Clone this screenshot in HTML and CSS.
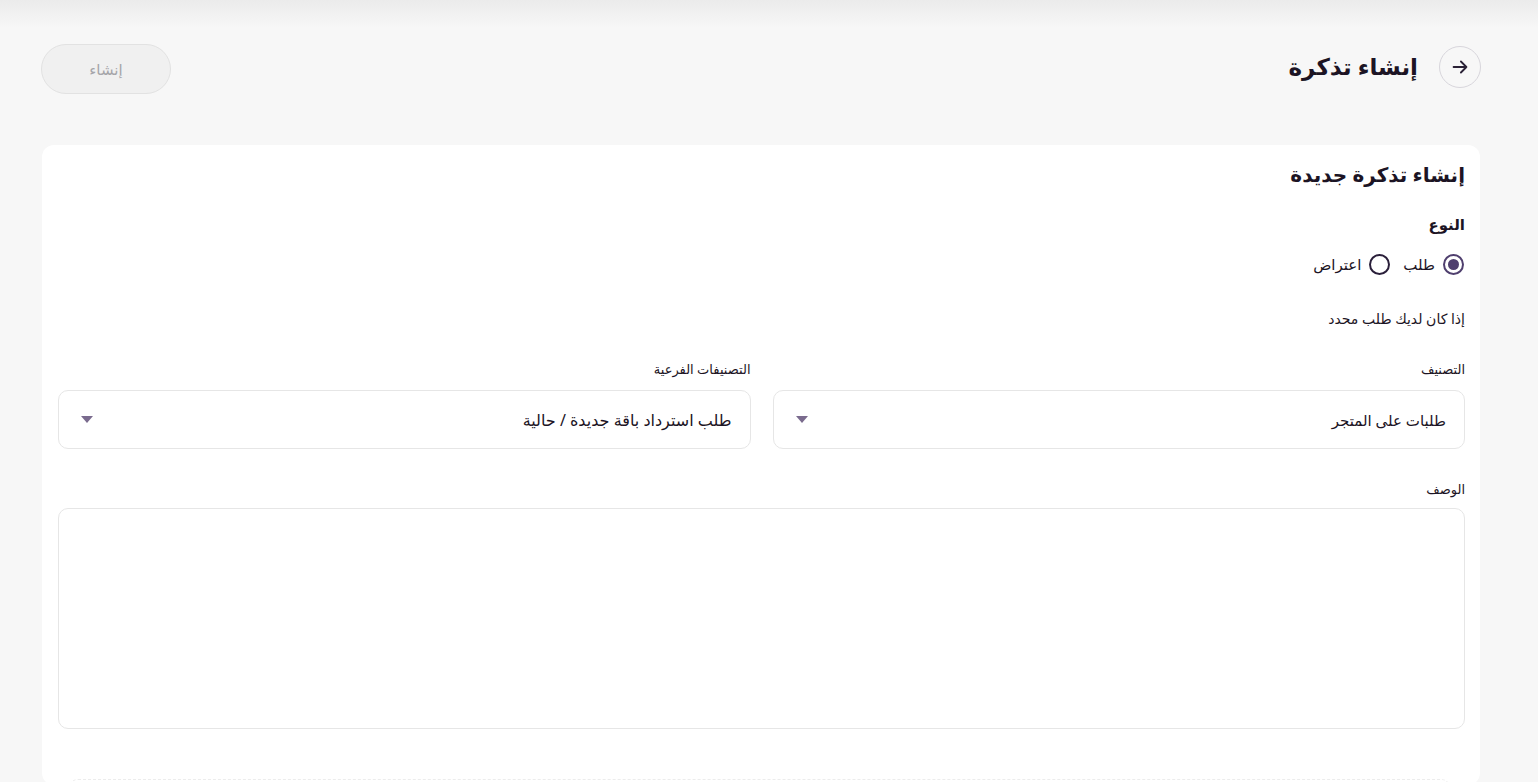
FILE: index.html
```html
<!DOCTYPE html>
<html lang="ar" dir="rtl">
<head>
    <meta charset="UTF-8">
    <meta name="viewport" content="width=device-width, initial-scale=1.0">
    <title>إنشاء تذكرة</title>
    <link rel="stylesheet" href="styles.css">
</head>
<body>
    <div class="top-shade"></div>
    <main class="page">
        <header class="page-header">
            <div class="header-title">
                <button class="back-button" aria-label="رجوع">
                    <svg viewBox="0 0 24 24">
                        <path d="M5 12h14M13 6l6 6-6 6"></path>
                    </svg>
                </button>
                <h1 class="title">إنشاء تذكرة</h1>
            </div>
            <button class="create-button" disabled>إنشاء</button>
        </header>

        <section class="card">
            <h2 class="card-title">إنشاء تذكرة جديدة</h2>

            <h3 class="field-title">النوع</h3>
            <div class="radio-group">
                <label class="radio">
                    <span class="radio-circle checked"></span>
                    <span>طلب</span>
                </label>
                <label class="radio">
                    <span class="radio-circle"></span>
                    <span>اعتراض</span>
                </label>
            </div>

            <p class="hint">إذا كان لديك طلب محدد</p>

            <div class="select-row">
                <div class="field">
                    <label class="field-label">التصنيف</label>
                    <div class="select">
                        <span>طلبات على المتجر</span>
                        <span class="select-arrow"></span>
                    </div>
                </div>
                <div class="field">
                    <label class="field-label">التصنيفات الفرعية</label>
                    <div class="select">
                        <span>طلب استرداد باقة جديدة / حالية</span>
                        <span class="select-arrow"></span>
                    </div>
                </div>
            </div>

            <div class="field">
                <label class="field-label">الوصف</label>
                <textarea class="textarea"></textarea>
            </div>

            <div class="upload-area"></div>
        </section>
    </main>
</body>
</html>
```

FILE: styles.css
```css
* {
    margin: 0;
    padding: 0;
    box-sizing: border-box;
    font-family: "Noto Sans", "DejaVu Sans", sans-serif;
}

body {
    background: #f7f7f7;
    color: #1c1424;
    height: 782px;
    overflow: hidden;
}

.top-shade {
    position: absolute;
    top: 0;
    left: 0;
    right: 0;
    height: 28px;
    background: linear-gradient(to bottom, #ebebeb, #f7f7f7);
    pointer-events: none;
}

.page {
    position: relative;
    padding: 44px 58px 0 41px;
}

.page-header {
    display: flex;
    justify-content: space-between;
    align-items: center;
    height: 50px;
}

.header-title {
    display: flex;
    align-items: center;
    gap: 21px;
}

.back-button {
    width: 42px;
    height: 42px;
    border-radius: 50%;
    border: 1px solid #d8d6dc;
    background: transparent;
    display: flex;
    align-items: center;
    justify-content: center;
    margin-top: -5px;
    margin-right: -1px;
}

.back-button svg {
    width: 22px;
    height: 22px;
    stroke: #2a2136;
    stroke-width: 2;
    fill: none;
    stroke-linecap: round;
    stroke-linejoin: round;
}

.title {
    font-size: 23px;
    font-weight: 700;
    margin-top: -6px;
}

.create-button {
    width: 130px;
    height: 50px;
    border-radius: 25px;
    border: 1px solid #e2e2e2;
    background: #f0f0f0;
    color: #a5a5a9;
    font-size: 15px;
}

.card {
    margin: 51px 0 0 1px;
    background: #ffffff;
    border-radius: 12px;
    padding: 14px 15px 0 16px;
    height: 640px;
    overflow: hidden;
}

.card-title {
    font-size: 20px;
    font-weight: 700;
    line-height: 32px;
}

.field-title {
    font-size: 15px;
    font-weight: 700;
    line-height: 22px;
    margin-top: 22px;
}

.radio-group {
    display: flex;
    gap: 12px;
    margin-top: 17px;
    height: 24px;
    align-items: center;
}

.radio {
    display: flex;
    align-items: center;
    gap: 8px;
    font-size: 15px;
}

.radio-circle {
    width: 21px;
    height: 21px;
    margin-right: 1px;
    border-radius: 50%;
    border: 2px solid #2a1f3a;
    display: flex;
    align-items: center;
    justify-content: center;
}

.radio-circle.checked {
    border-color: #4f3f6e;
}

.radio-circle.checked::after {
    content: "";
    width: 11px;
    height: 11px;
    border-radius: 50%;
    background: #4f3f6e;
}

.hint {
    font-size: 14px;
    line-height: 20px;
    margin-top: 33px;
}

.select-row {
    display: flex;
    gap: 22px;
    margin-top: 30px;
}

.select-row .field {
    flex: 1;
}

.field-label {
    display: block;
    font-size: 13px;
    line-height: 20px;
    margin-bottom: 11px;
}

.select {
    height: 59px;
    border: 1px solid #e6e6e6;
    border-radius: 10px;
    display: flex;
    align-items: center;
    justify-content: space-between;
    padding: 0 18px 0 22px;
    font-size: 15px;
}

.select-row .field:last-child .select {
    font-size: 16px;
}

.select-arrow {
    width: 0;
    height: 0;
    border-left: 6px solid transparent;
    border-right: 6px solid transparent;
    border-top: 7px solid #7a6b8e;
}

.textarea {
    display: block;
    width: 100%;
    height: 221px;
    border: 1px solid #e6e6e6;
    border-radius: 10px;
    resize: none;
    margin-top: -2px;
}

.select-row + .field {
    margin-top: 30px;
}

.upload-area {
    margin: 50px 14px 0 10px;
    height: 60px;
    border: 1px dashed #ececec;
    border-radius: 10px;
}
```
